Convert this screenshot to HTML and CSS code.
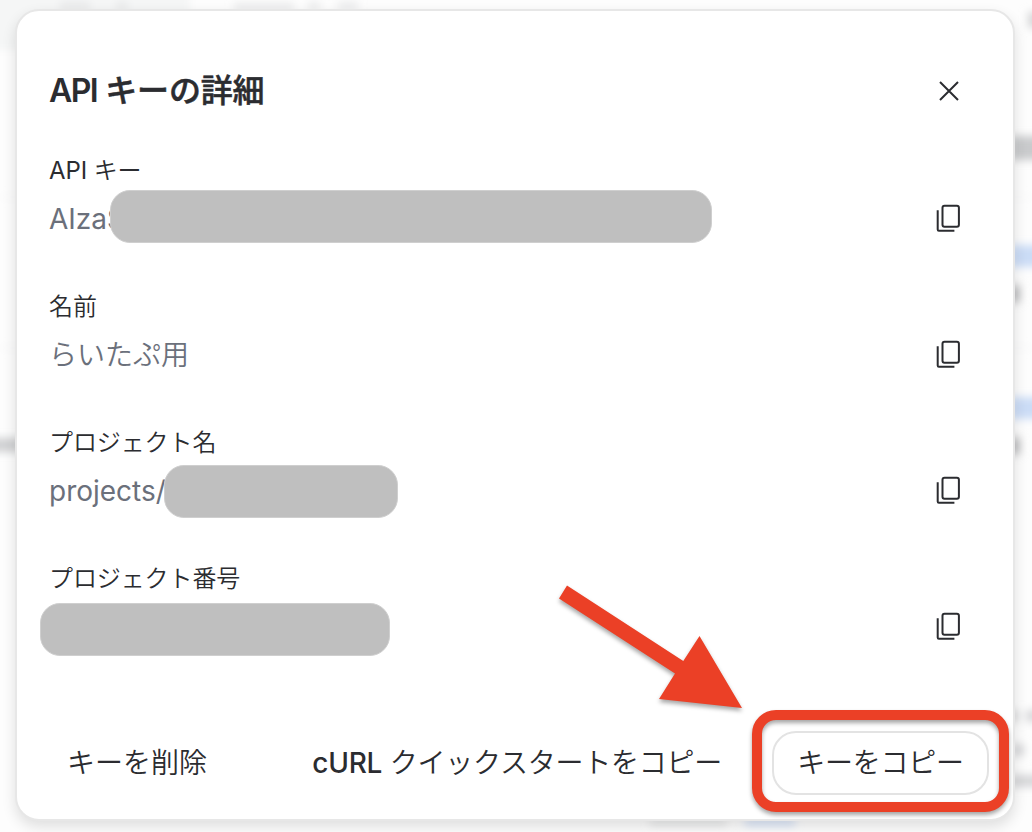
FILE: index.html
```html
<!DOCTYPE html>
<html lang="ja">
<head>
    <meta charset="UTF-8">
    <meta name="viewport" content="width=device-width, initial-scale=1.0">
    <title>API キーの詳細</title>
    <link rel="stylesheet" href="styles.css">
</head>
<body>
    <!-- Blurred page behind the dialog -->
    <svg class="backdrop" viewBox="0 0 1032 832" aria-hidden="true">
        <defs>
            <filter id="soft" filterUnits="userSpaceOnUse" x="-60" y="-60" width="1150" height="950">
                <feGaussianBlur stdDeviation="4"/>
            </filter>
        </defs>
        <g filter="url(#soft)">
            <rect x="-40" y="-30" width="230" height="80" rx="30" fill="#f5f6f6"/>
            <path d="M60 6h30M116 6h12M234 7h60M308 6h12M338 6h20" stroke="#e3e4e5" stroke-width="6"/>
            <path d="M0 197h1032M0 348h1032" stroke="#f4f4f5" stroke-width="2"/>
            <path d="M-20 445h50" stroke="#cfd0d2" stroke-width="14"/>
            <path d="M1010 148h60" stroke="#c9cacc" stroke-width="24"/>
            <path d="M1010 256h60M1010 408h60" stroke="#cbdcf6" stroke-width="22"/>
            <path d="M1008 294h12M1008 446h12" stroke="#bdbec0" stroke-width="17"/>
            <path d="M1028 20h14" stroke="#d5d6d7" stroke-width="16"/>
            <path d="M1010 716h8M1026 716h12M1012 750h12M1010 781h30" stroke="#d5d6d8" stroke-width="12"/>
            <path d="M650 822h76" stroke="#e2e3e4" stroke-width="6"/>
            <path d="M745 822h50" stroke="#cbdcf6" stroke-width="6"/>
        </g>
    </svg>

    <div class="dialog">
        <div class="dialog-header">
            <h1><span class="latin">API</span> キーの詳細</h1>
            <button class="icon-button">
                <svg width="32" height="32" viewBox="0 0 32 32">
                    <path d="M7 7l18 18M25 7l-18 18"/>
                </svg>
            </button>
        </div>

        <!-- Key details -->
        <div class="details">
            <div class="field">
                <div class="field-text">
                    <div class="label"><span class="latin">API</span> キー</div>
                    <div class="value"><span class="latin">AIzaS</span><span class="mask mask-key"></span></div>
                </div>
                <button class="icon-button">
                    <svg width="32" height="32" viewBox="0 0 32 32">
                        <rect x="10.5" y="5.7" width="16.4" height="21.1" rx="2"/>
                        <path d="M5.7 10.3v19.3a1.2 1.2 0 0 0 1.2 1.2h15.5"/>
                    </svg>
                </button>
            </div>
            <div class="field">
                <div class="field-text">
                    <div class="label">名前</div>
                    <div class="value">らいたぷ用</div>
                </div>
                <button class="icon-button">
                    <svg width="32" height="32" viewBox="0 0 32 32">
                        <rect x="10.5" y="5.7" width="16.4" height="21.1" rx="2"/>
                        <path d="M5.7 10.3v19.3a1.2 1.2 0 0 0 1.2 1.2h15.5"/>
                    </svg>
                </button>
            </div>
            <div class="field">
                <div class="field-text">
                    <div class="label">プロジェクト名</div>
                    <div class="value"><span class="latin">projects/</span><span class="mask mask-project"></span></div>
                </div>
                <button class="icon-button">
                    <svg width="32" height="32" viewBox="0 0 32 32">
                        <rect x="10.5" y="5.7" width="16.4" height="21.1" rx="2"/>
                        <path d="M5.7 10.3v19.3a1.2 1.2 0 0 0 1.2 1.2h15.5"/>
                    </svg>
                </button>
            </div>
            <div class="field">
                <div class="field-text">
                    <div class="label">プロジェクト番号</div>
                    <div class="value"><span class="mask mask-number"></span></div>
                </div>
                <button class="icon-button">
                    <svg width="32" height="32" viewBox="0 0 32 32">
                        <rect x="10.5" y="5.7" width="16.4" height="21.1" rx="2"/>
                        <path d="M5.7 10.3v19.3a1.2 1.2 0 0 0 1.2 1.2h15.5"/>
                    </svg>
                </button>
            </div>
        </div>

        <!-- Actions -->
        <div class="actions">
            <button class="text-button delete">キーを削除</button>
            <button class="text-button curl"><span class="latin">cURL</span> クイックスタートをコピー</button>
            <button class="outline-button">キーをコピー<span class="highlight"></span></button>
        </div>

        <svg class="arrow" width="200" height="140" viewBox="550 580 200 140">
            <path d="M567 585.5L683.3 661L699.5 636L742 708L659 699L675 673.5L559 598.5Z"/>
        </svg>
    </div>
</body>
</html>
```

FILE: styles.css
```css
* {
    box-sizing: border-box;
}

body {
    margin: 0;
    padding: 9px 17px 11px 15px;
    height: 832px;
    overflow: hidden;
    background: #fdfdfd;
    color: #2b2c30;
    font-family: Inter, "Noto Sans CJK JP", sans-serif;
    font-weight: 350;
}

button {
    padding: 0;
    border: none;
    background: none;
    color: inherit;
    font: inherit;
    white-space: nowrap;
    cursor: pointer;
}

.backdrop {
    position: absolute;
    top: 0;
    left: 0;
    width: 1032px;
    height: 832px;
}

.dialog {
    position: relative;
    height: 812px;
    padding: 56px 24px 24px 32px;
    border: 2px solid #e7e7e7;
    border-radius: 24px;
    background: #fff;
    box-shadow: 0 6px 14px rgba(0, 0, 0, 0.12);
}

.dialog-header {
    display: flex;
    justify-content: space-between;
    align-items: center;
    height: 48px;
    padding-right: 24px;
}

h1 {
    margin: 0;
    font-size: 32px;
    font-weight: 500;
    line-height: 48px;
    letter-spacing: -0.2px;
    -webkit-text-stroke: 0.5px #2b2c30;
}

h1 .latin {
    font-weight: 600;
    letter-spacing: -1.6px;
    -webkit-text-stroke: 0;
}

.icon-button {
    width: 32px;
    height: 32px;
}

.icon-button svg {
    display: block;
    fill: none;
    stroke: #2b2c30;
    stroke-width: 2;
}

.details {
    margin-top: 40px;
}

.field {
    display: flex;
    justify-content: space-between;
    height: 136px;
    padding-right: 25px;
}

.field .icon-button {
    margin-top: 45px;
}

.label {
    height: 32px;
    font-size: 24px;
    line-height: 32px;
    letter-spacing: -0.1px;
}

.value {
    position: relative;
    height: 40px;
    margin-top: 12px;
    color: #6b707b;
    font-size: 28px;
    line-height: 40px;
}

.label,
.value {
    white-space: nowrap;
}

.label .latin,
.value .latin {
    font-weight: 400;
}

/* Gray plates over the private values */
.mask {
    position: absolute;
    height: 53px;
    border: 1px solid #cfcfcf;
    border-radius: 20px;
    background: #bfbfbf;
}

.mask-key {
    top: -9px;
    left: 61px;
    width: 602px;
}

.mask-project {
    top: -6px;
    left: 115px;
    width: 234px;
}

.mask-number {
    top: -4px;
    left: -9px;
    width: 350px;
}

.actions {
    display: flex;
    align-items: center;
    height: 64px;
    margin-top: 32px;
    padding-left: 18px;
    font-size: 28px;
}

.text-button {
    padding-bottom: 4px;
}

.delete {
    margin-right: auto;
}

.curl {
    margin-right: 50px;
    letter-spacing: -0.25px;
}

.curl .latin {
    font-weight: 500;
}

.outline-button {
    position: relative;
    width: 217px;
    height: 64px;
    padding-bottom: 4px;
    border: 2px solid #e3e3e3;
    border-radius: 24px;
    letter-spacing: -0.25px;
}

.highlight {
    position: absolute;
    top: -23px;
    left: -22px;
    width: 257px;
    height: 102px;
    border: 10px solid #eb4026;
    border-radius: 24px;
    filter: drop-shadow(0 3px 2px rgba(0, 0, 0, 0.35));
}

.arrow {
    position: absolute;
    top: 569px;
    left: 533px;
    fill: #eb4026;
    filter: drop-shadow(0 3px 2px rgba(0, 0, 0, 0.35));
}
```
